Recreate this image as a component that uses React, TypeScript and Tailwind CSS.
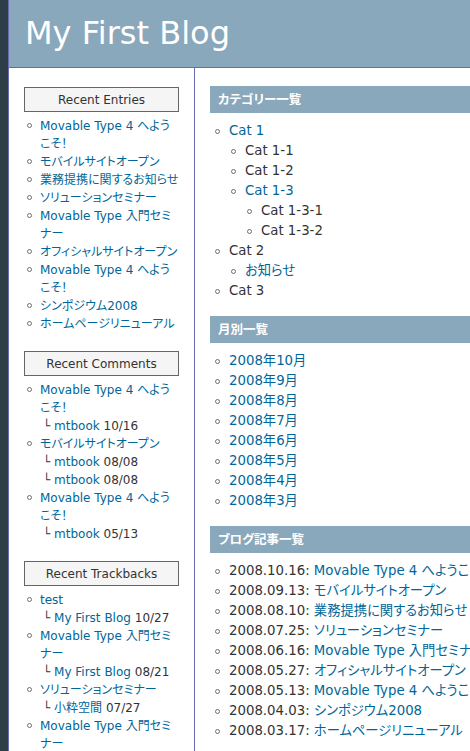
import React from 'react';

type Cat = { name: string; link?: boolean; children?: Cat[] };
type Sub = { by: string; date: string };
type Recent = { title: string; subs: Sub[] };

const entries = [
  'Movable Type 4 へようこそ！',
  'モバイルサイトオープン',
  '業務提携に関するお知らせ',
  'ソリューションセミナー',
  'Movable Type 入門セミナー',
  'オフィシャルサイトオープン',
  'Movable Type 4 へようこそ！',
  'シンポジウム2008',
  'ホームページリニューアル',
];

const comments: Recent[] = [
  { title: 'Movable Type 4 へようこそ！', subs: [{ by: 'mtbook', date: '10/16' }] },
  {
    title: 'モバイルサイトオープン',
    subs: [
      { by: 'mtbook', date: '08/08' },
      { by: 'mtbook', date: '08/08' },
    ],
  },
  { title: 'Movable Type 4 へようこそ！', subs: [{ by: 'mtbook', date: '05/13' }] },
];

const trackbacks: Recent[] = [
  { title: 'test', subs: [{ by: 'My First Blog', date: '10/27' }] },
  { title: 'Movable Type 入門セミナー', subs: [{ by: 'My First Blog', date: '08/21' }] },
  { title: 'ソリューションセミナー', subs: [{ by: '小粋空間', date: '07/27' }] },
  { title: 'Movable Type 入門セミナー', subs: [] },
];

const categories: Cat[] = [
  {
    name: 'Cat 1',
    link: true,
    children: [
      { name: 'Cat 1-1' },
      { name: 'Cat 1-2' },
      { name: 'Cat 1-3', link: true, children: [{ name: 'Cat 1-3-1' }, { name: 'Cat 1-3-2' }] },
    ],
  },
  { name: 'Cat 2', children: [{ name: 'お知らせ', link: true }] },
  { name: 'Cat 3' },
];

const months = ['10', '9', '8', '7', '6', '5', '4', '3'].map((m) => `2008年${m}月`);

const posts = [
  ['2008.10.16', 'Movable Type 4 へようこそ！'],
  ['2008.09.13', 'モバイルサイトオープン'],
  ['2008.08.10', '業務提携に関するお知らせ'],
  ['2008.07.25', 'ソリューションセミナー'],
  ['2008.06.16', 'Movable Type 入門セミナー'],
  ['2008.05.27', 'オフィシャルサイトオープン'],
  ['2008.05.13', 'Movable Type 4 へようこそ！'],
  ['2008.04.03', 'シンポジウム2008'],
  ['2008.03.17', 'ホームページリニューアル'],
];

const Bullet = ({ className }: { className: string }) => (
  <span className={`block w-[5px] h-[5px] shrink-0 rounded-full border border-[#6f6f6f] ${className}`} />
);

const SideItem = ({ children }: { children: React.ReactNode }) => (
  <li className="flex">
    <span className="w-[16px] shrink-0 pl-[3px]">
      <Bullet className="mt-[6px]" />
    </span>
    <div className="min-w-0 flex-1">{children}</div>
  </li>
);

const SideBox = ({ title, children }: { title: string; children: React.ReactNode }) => (
  <div className="mb-[18px]">
    <h2 className="h-[25px] border border-[#666] bg-[#f5f5f5] flex items-center justify-center text-[12px] text-[#333]">
      {title}
    </h2>
    <ul className="mt-[5px]">{children}</ul>
  </div>
);

const RecentList = ({ items }: { items: Recent[] }) => (
  <>
    {items.map((it, i) => (
      <SideItem key={i}>
        <a className="text-[#006699]">{it.title}</a>
        {it.subs.map((s, j) => (
          <div key={j} className="pl-[3px] text-[#333] whitespace-nowrap">
            └ <a className="text-[#006699]">{s.by}</a> {s.date}
          </div>
        ))}
      </SideItem>
    ))}
  </>
);

const CatTree = ({ items, top }: { items: Cat[]; top?: boolean }) => (
  <ul className={top ? 'pl-[5px]' : 'pl-[2px]'}>
    {items.map((c) => (
      <li key={c.name} className="flex">
        <Bullet className="mt-[8px] mr-[9px]" />
        <div>
          <span className={c.link ? 'text-[#006699]' : 'text-[#333]'}>{c.name}</span>
          {c.children && <CatTree items={c.children} />}
        </div>
      </li>
    ))}
  </ul>
);

const MainBox = ({ title, children }: { title: string; children: React.ReactNode }) => (
  <div className="mb-[15px]">
    <h2 className="h-[27px] bg-[#8aa8bc] text-white font-bold text-[12.5px] pl-[8px] flex items-center">{title}</h2>
    <div className="mt-[8px]">{children}</div>
  </div>
);

const MainItem = ({ children }: { children: React.ReactNode }) => (
  <li className="flex">
    <Bullet className="mt-[8px] mr-[9px]" />
    <div className="whitespace-nowrap">{children}</div>
  </li>
);

export default function App() {
  return (
    <div className="w-[470px] h-[751px] overflow-hidden bg-white flex font-['DejaVu_Sans','Noto_Sans_CJK_JP',sans-serif] [font-feature-settings:'palt']">
      <div className="w-[8px] shrink-0 bg-[#2e3e48]" />
      <div className="w-[720px] shrink-0 border-l border-[#6a6aae] flex flex-col">
        <header className="h-[68px] shrink-0 bg-[#8aa8bc] border-b border-[#6a6aae] pl-[16px] pt-[15px]">
          <h1 className="text-[32px] leading-[37px] text-white">My First Blog</h1>
        </header>
        <div className="flex flex-1">
          <aside className="w-[186px] shrink-0 border-r border-[#6a6aae] px-[15px] pt-[19px] text-[12px] leading-[18px]">
            <SideBox title="Recent Entries">
              {entries.map((e, i) => (
                <SideItem key={i}>
                  <a className="text-[#006699]">{e}</a>
                </SideItem>
              ))}
            </SideBox>
            <SideBox title="Recent Comments">
              <RecentList items={comments} />
            </SideBox>
            <SideBox title="Recent Trackbacks">
              <RecentList items={trackbacks} />
            </SideBox>
          </aside>
          <main className="flex-1 pl-[15px] pt-[18px] text-[13.3px] leading-[20px]">
            <MainBox title="カテゴリー一覧">
              <CatTree items={categories} top />
            </MainBox>
            <MainBox title="月別一覧">
              <ul className="pl-[5px]">
                {months.map((m) => (
                  <MainItem key={m}>
                    <a className="text-[#006699]">{m}</a>
                  </MainItem>
                ))}
              </ul>
            </MainBox>
            <MainBox title="ブログ記事一覧">
              <ul className="pl-[5px]">
                {posts.map(([d, t]) => (
                  <MainItem key={d}>
                    <span className="text-[#333]">{d}: </span>
                    <a className="text-[#006699]">{t}</a>
                  </MainItem>
                ))}
              </ul>
            </MainBox>
          </main>
        </div>
      </div>
    </div>
  );
}
